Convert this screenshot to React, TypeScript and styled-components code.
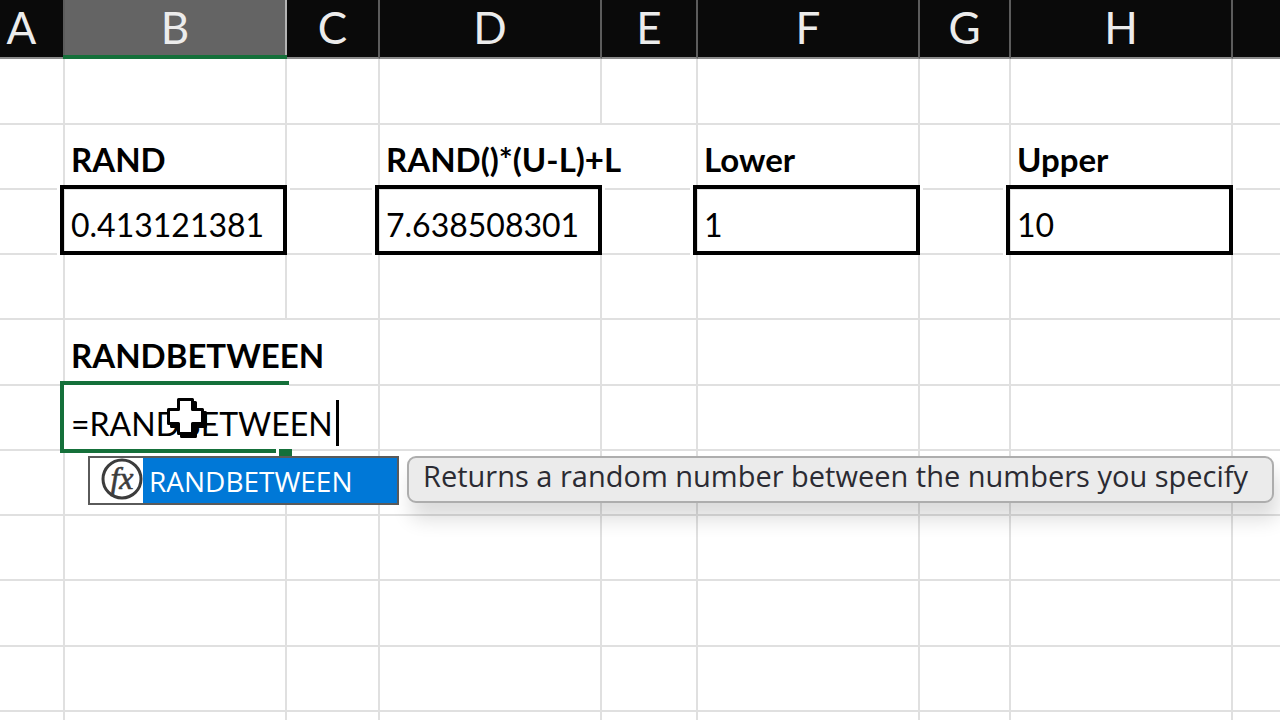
import React from "react";
import styled, { createGlobalStyle, css } from "styled-components";

const GlobalStyle = createGlobalStyle`
  *, *::before, *::after { box-sizing: border-box; }
  body { margin: 0; background: #fff; overflow: hidden; }
`;

const cellFont = `Lato, "Liberation Sans", sans-serif`;
const uiFont = `"Open Sans", "Noto Sans", sans-serif`;
const gridLine = "#e0e0e0";
const green = "#15703a";

const Sheet = styled.main`
  height: 100vh;
  overflow: hidden;
  background: #fff;
`;

const Grid = styled.table`
  width: 100%;
  table-layout: fixed;
  border-collapse: separate;
  border-spacing: 0;
  font-family: ${cellFont};
`;

const Column = styled.col<{ $width?: number }>`
  width: ${(p) => (p.$width ? `${p.$width}px` : "auto")};
`;

const ColumnHeader = styled.th<{ $selected?: boolean; $clipped?: boolean }>`
  height: 59px;
  padding: 0 ${(p) => (p.$clipped ? 20 : 0)}px 3px 0;
  border-right: 2px solid ${(p) => (p.$selected ? "#b4b4b4" : "#5c5c5c")};
  border-bottom: 2px solid #8c8c8c;
  background: #0a0a0a;
  color: #ececec;
  font-size: 44px;
  font-weight: 400;
  line-height: 52px;
  text-align: center;
  &:last-child {
    border-right: 0;
  }
  ${(p) =>
    p.$selected &&
    css`
      position: relative;
      background: #646464;
      &::after {
        content: "";
        position: absolute;
        inset: auto -2px -2px -2px;
        height: 4px;
        background: ${green};
      }
    `}
`;

const Row = styled.tr`
  height: 65px;
  &:nth-child(4n + 1) {
    height: 66px;
  }
`;

const Cell = styled.td<{ $spills?: boolean; $bold?: boolean; $active?: boolean }>`
  position: relative;
  z-index: ${(p) => (p.$active ? 1 : "auto")};
  padding: 0 0 ${(p) => (p.$bold ? 9 : 8)}px 6px;
  border-right: 2px solid ${(p) => (p.$spills ? "transparent" : gridLine)};
  border-bottom: 2px solid ${gridLine};
  color: #000;
  font-size: ${(p) => (p.$bold ? 33 : 32)}px;
  font-weight: ${(p) => (p.$bold ? 700 : 400)};
  line-height: 40px;
  vertical-align: bottom;
  white-space: nowrap;
  &:last-child {
    border-right: 0;
  }
`;

const BoxOutline = styled.span`
  position: absolute;
  inset: -5px -2px -2px -5px;
  border: 4px solid #000;
  box-shadow: 3px 0 #fff, -3px 0 #fff;
  pointer-events: none;
`;

const Editor = styled.div`
  position: absolute;
  inset: -5px -4px -4px -5px;
  border: solid ${green};
  border-width: 4px 0 0 4px;
  background: #fff;
  &::before {
    content: "";
    position: absolute;
    inset: auto 13px 0 -4px;
    height: 4px;
    background: ${green};
  }
  &::after {
    content: "";
    position: absolute;
    right: -3px;
    bottom: -4px;
    width: 13px;
    height: 8px;
    background: ${green};
  }
`;

const EditLine = styled.div`
  position: absolute;
  top: 14px;
  left: 6px;
  display: flex;
  align-items: flex-start;
  background: #fff;
`;

const FormulaInput = styled.input`
  width: 265px;
  height: 48px;
  padding: 0;
  border: 0;
  outline: 0;
  background: transparent;
  color: #000;
  font: 400 32px/48px ${cellFont};
`;

const Caret = styled.span`
  width: 3px;
  height: 46px;
  background: #000;
`;

const Pointer = styled.svg`
  position: absolute;
  top: 12px;
  left: 101px;
  width: 43px;
  height: 42px;
`;

const Assist = styled.div`
  position: absolute;
  top: 70px;
  left: 23px;
  display: flex;
  align-items: flex-start;
  gap: 8px;
`;

const Suggestions = styled.ul`
  width: 311px;
  margin: 0;
  padding: 0;
  border: 2px solid #5a5a5a;
  background: #fff;
  list-style: none;
`;

const Suggestion = styled.button`
  display: flex;
  width: 100%;
  height: 45px;
  padding: 0;
  border: 0;
  background: #fff;
  text-align: left;
`;

const FunctionIcon = styled.svg`
  flex: none;
  width: 42px;
  height: 42px;
  margin-left: 11px;
`;

const SuggestionName = styled.span`
  flex: 1;
  padding-left: 6px;
  background: #0078d7;
  color: #fff;
  font: 400 28px/46px ${uiFont};
`;

const Tooltip = styled.div`
  height: 47px;
  padding: 0 24px 0 14px;
  border: 2px solid #adadad;
  border-radius: 9px;
  background: #ebebeb;
  box-shadow: 4px 16px 20px rgba(0, 0, 0, 0.14);
  color: #2b2b33;
  font: 400 29px/36px ${uiFont};
`;

const columns = [
  { name: "A", width: 65 },
  { name: "B", width: 222 },
  { name: "C", width: 93 },
  { name: "D", width: 222 },
  { name: "E", width: 96 },
  { name: "F", width: 222 },
  { name: "G", width: 91 },
  { name: "H", width: 222 },
  { name: "" },
];

type CellData = { text?: string; bold?: boolean; boxed?: boolean; spills?: boolean; editing?: boolean };

const cells: Record<string, CellData> = {
  B2: { text: "RAND", bold: true },
  D2: { text: "RAND()*(U-L)+L", bold: true, spills: true },
  F2: { text: "Lower", bold: true },
  H2: { text: "Upper", bold: true },
  B3: { text: "0.413121381", boxed: true },
  D3: { text: "7.638508301", boxed: true },
  F3: { text: "1", boxed: true },
  H3: { text: "10", boxed: true },
  B5: { text: "RANDBETWEEN", bold: true, spills: true },
  B6: { editing: true, spills: true },
};

const rows = Array.from({ length: 11 }, (_, i) => i + 1);

const plusShape = "M12.5 1.5h14v10h10v14h-10v10h-14v-10h-10v-14h10z";

function ActiveEditor() {
  return (
    <>
      <Editor />
      <EditLine>
        <FormulaInput aria-label="Formula" defaultValue="=RANDBETWEEN" spellCheck={false} />
        <Caret />
      </EditLine>
      <Pointer viewBox="0 0 43 42" aria-hidden="true">
        <g stroke="#000" strokeWidth="3" strokeLinejoin="round">
          <path d={plusShape} transform="translate(3 3)" fill="#000" />
          <path d={plusShape} fill="#fff" />
        </g>
      </Pointer>
      <Assist>
        <Suggestions>
          <li>
            <Suggestion type="button">
              <FunctionIcon viewBox="0 0 42 42" aria-hidden="true">
                <circle cx="21" cy="21" r="19" fill="#fff" stroke="#3c3c3c" strokeWidth="3" />
                <text
                  x="21"
                  y="31"
                  textAnchor="middle"
                  fontFamily="'Liberation Serif', serif"
                  fontStyle="italic"
                  fontSize="32"
                  fill="#3c3c3c"
                  stroke="#3c3c3c"
                  strokeWidth="0.6"
                >
                  fx
                </text>
              </FunctionIcon>
              <SuggestionName>RANDBETWEEN</SuggestionName>
            </Suggestion>
          </li>
        </Suggestions>
        <Tooltip role="tooltip">Returns a random number between the numbers you specify</Tooltip>
      </Assist>
    </>
  );
}

export default function App() {
  return (
    <Sheet>
      <GlobalStyle />
      <Grid>
        <colgroup>
          {columns.map((c) => (
            <Column key={c.name} $width={c.width} />
          ))}
        </colgroup>
        <thead>
          <tr>
            {columns.map((c) => (
              <ColumnHeader key={c.name} scope="col" $selected={c.name === "B"} $clipped={c.name === "A"}>
                {c.name}
              </ColumnHeader>
            ))}
          </tr>
        </thead>
        <tbody>
          {rows.map((r) => (
            <Row key={r}>
              {columns.map((c) => {
                const cell = cells[`${c.name}${r}`] ?? {};
                return (
                  <Cell key={c.name} $bold={cell.bold} $spills={cell.spills} $active={cell.editing}>
                    {cell.text}
                    {cell.boxed && <BoxOutline />}
                    {cell.editing && <ActiveEditor />}
                  </Cell>
                );
              })}
            </Row>
          ))}
        </tbody>
      </Grid>
    </Sheet>
  );
}
